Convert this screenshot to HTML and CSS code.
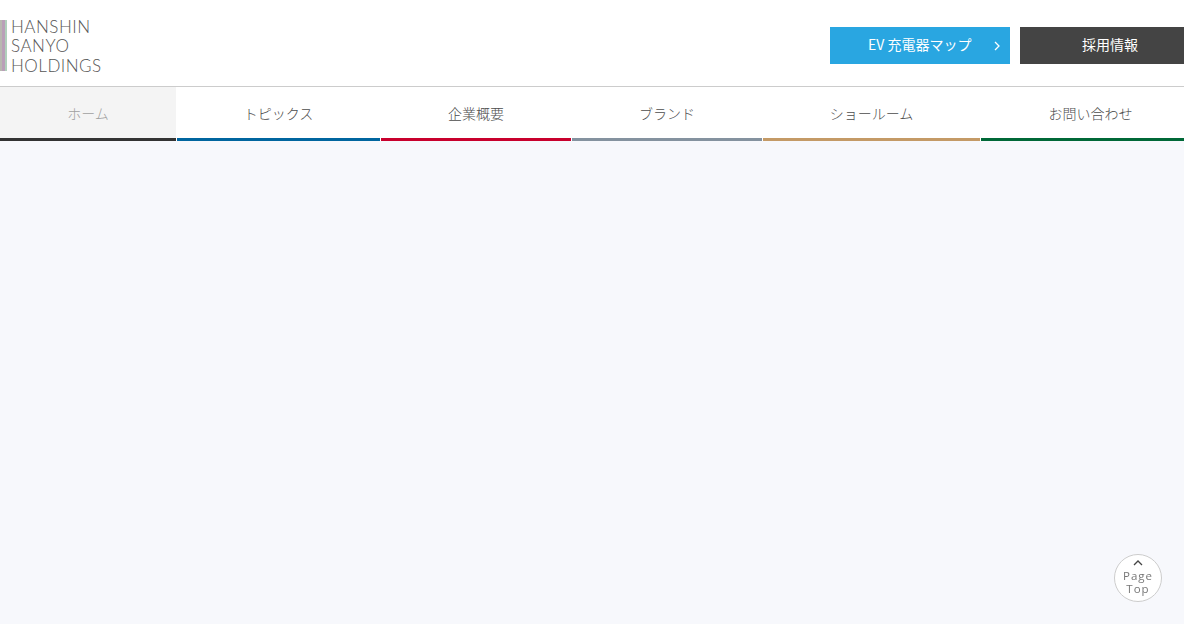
FILE: index.html
```html
<!DOCTYPE html>
<html lang="ja">
<head>
<meta charset="utf-8">
<title>阪神サンヨーホールディングス</title>
<link rel="stylesheet" href="styles.css">
</head>
<body>
<header class="header">
  <a class="logo" href="#">
    <span class="logo-mark"><i class="s1"></i><i class="s2"></i><i class="s3"></i></span>
    <span class="logo-text">HANSHIN<br>SANYO<br>HOLDINGS</span>
  </a>
  <div class="actions">
    <a class="btn btn-ev" href="#"><span class="btn-label">EV 充電器マップ</span>
      <svg class="chev" width="6" height="10" viewBox="0 0 6 10"><path d="M1 1l4 4-4 4" fill="none" stroke="#fff" stroke-width="1.3"/></svg>
    </a>
    <a class="btn btn-recruit" href="#"><span class="btn-label">採用情報</span></a>
  </div>
</header>
<nav class="nav">
  <a class="nav-item home" href="#">ホーム</a>
  <a class="nav-item topics" href="#">トピックス</a>
  <a class="nav-item company" href="#">企業概要</a>
  <a class="nav-item brand" href="#">ブランド</a>
  <a class="nav-item showroom" href="#">ショールーム</a>
  <a class="nav-item contact" href="#">お問い合わせ</a>
</nav>
<main class="main"></main>
<a class="page-top" href="#">
  <svg width="10" height="6" viewBox="0 0 10 6"><path d="M1 5l4-4 4 4" fill="none" stroke="#444" stroke-width="1.3"/></svg>
  <span>Page<br>Top</span>
</a>
</body>
</html>
```
FILE: styles.css
```css
* { box-sizing: border-box; }
html, body { height: 100%; }
body {
  margin: 0;
  display: flex;
  flex-direction: column;
  background: #f7f8fc;
  font-family: "Noto Sans CJK JP", "Noto Sans", sans-serif;
  overflow: hidden;
}
a { text-decoration: none; color: inherit; }
.header {
  height: 87px;
  flex: none;
  padding-top: 5px;
  background: #fff;
  border-bottom: 1px solid #ccc;
  display: flex;
  justify-content: space-between;
  align-items: center;
}
.logo { display: flex; align-items: center; gap: 4px; height: 51px; }
.logo-mark { display: flex; width: 7px; height: 51px; }
.logo-mark i { display: block; }
.s1 { width: 2px; background: #b8b8b0; }
.s2 { width: 3px; background: #b9a0b8; }
.s3 { width: 2px; background: #b0d0bc; }
.logo-text {
  font-family: Lato, sans-serif;
  font-weight: 300;
  font-size: 17px;
  line-height: 19.5px;
  letter-spacing: 0.5px;
  margin-top: 1px;
  color: #555;
}
.actions { display: flex; gap: 10px; }
.btn {
  height: 37px;
  display: flex;
  align-items: center;
  color: #fff;
  font-size: 14px;
}
.btn-label { margin-bottom: 3px; }
.btn-ev {
  width: 180px;
  background: #29a6e1;
  padding-left: 38px;
}
.chev { margin-left: 23px; }
.btn-recruit {
  width: 164px;
  background: #444;
  justify-content: center;
  padding-left: 16px;
}
.nav {
  flex: none;
  height: 54px;
  background: #fff;
  display: grid;
  grid-template-columns: 176px 203px 190px 190px 217px 203px;
  column-gap: 1px;
}
.nav-item {
  display: flex;
  align-items: center;
  justify-content: center;
  font-size: 14px;
  font-weight: 300;
  color: #4c4c4c;
  border-bottom: 3px solid #000;
}
.home { background: #f4f4f4; color: #a0a0a0; border-color: #333; }
.topics { border-color: #00659f; }
.company { border-color: #c8002d; }
.brand { border-color: #84929f; }
.showroom { border-color: #c49a66; }
.contact { border-color: #006837; padding-left: 16px; }
.main { flex: 1; }
.page-top {
  position: fixed;
  left: 1114px;
  top: 554px;
  width: 48px;
  height: 48px;
  border-radius: 50%;
  background: #fff;
  border: 1px solid #ccc;
  display: flex;
  flex-direction: column;
  align-items: center;
  padding-top: 5px;
  color: #777;
  font-family: "Open Sans", sans-serif;
  font-size: 11.5px;
  line-height: 13px;
  letter-spacing: 1px;
  text-align: center;
}
.page-top span { margin-top: 3px; }
```
